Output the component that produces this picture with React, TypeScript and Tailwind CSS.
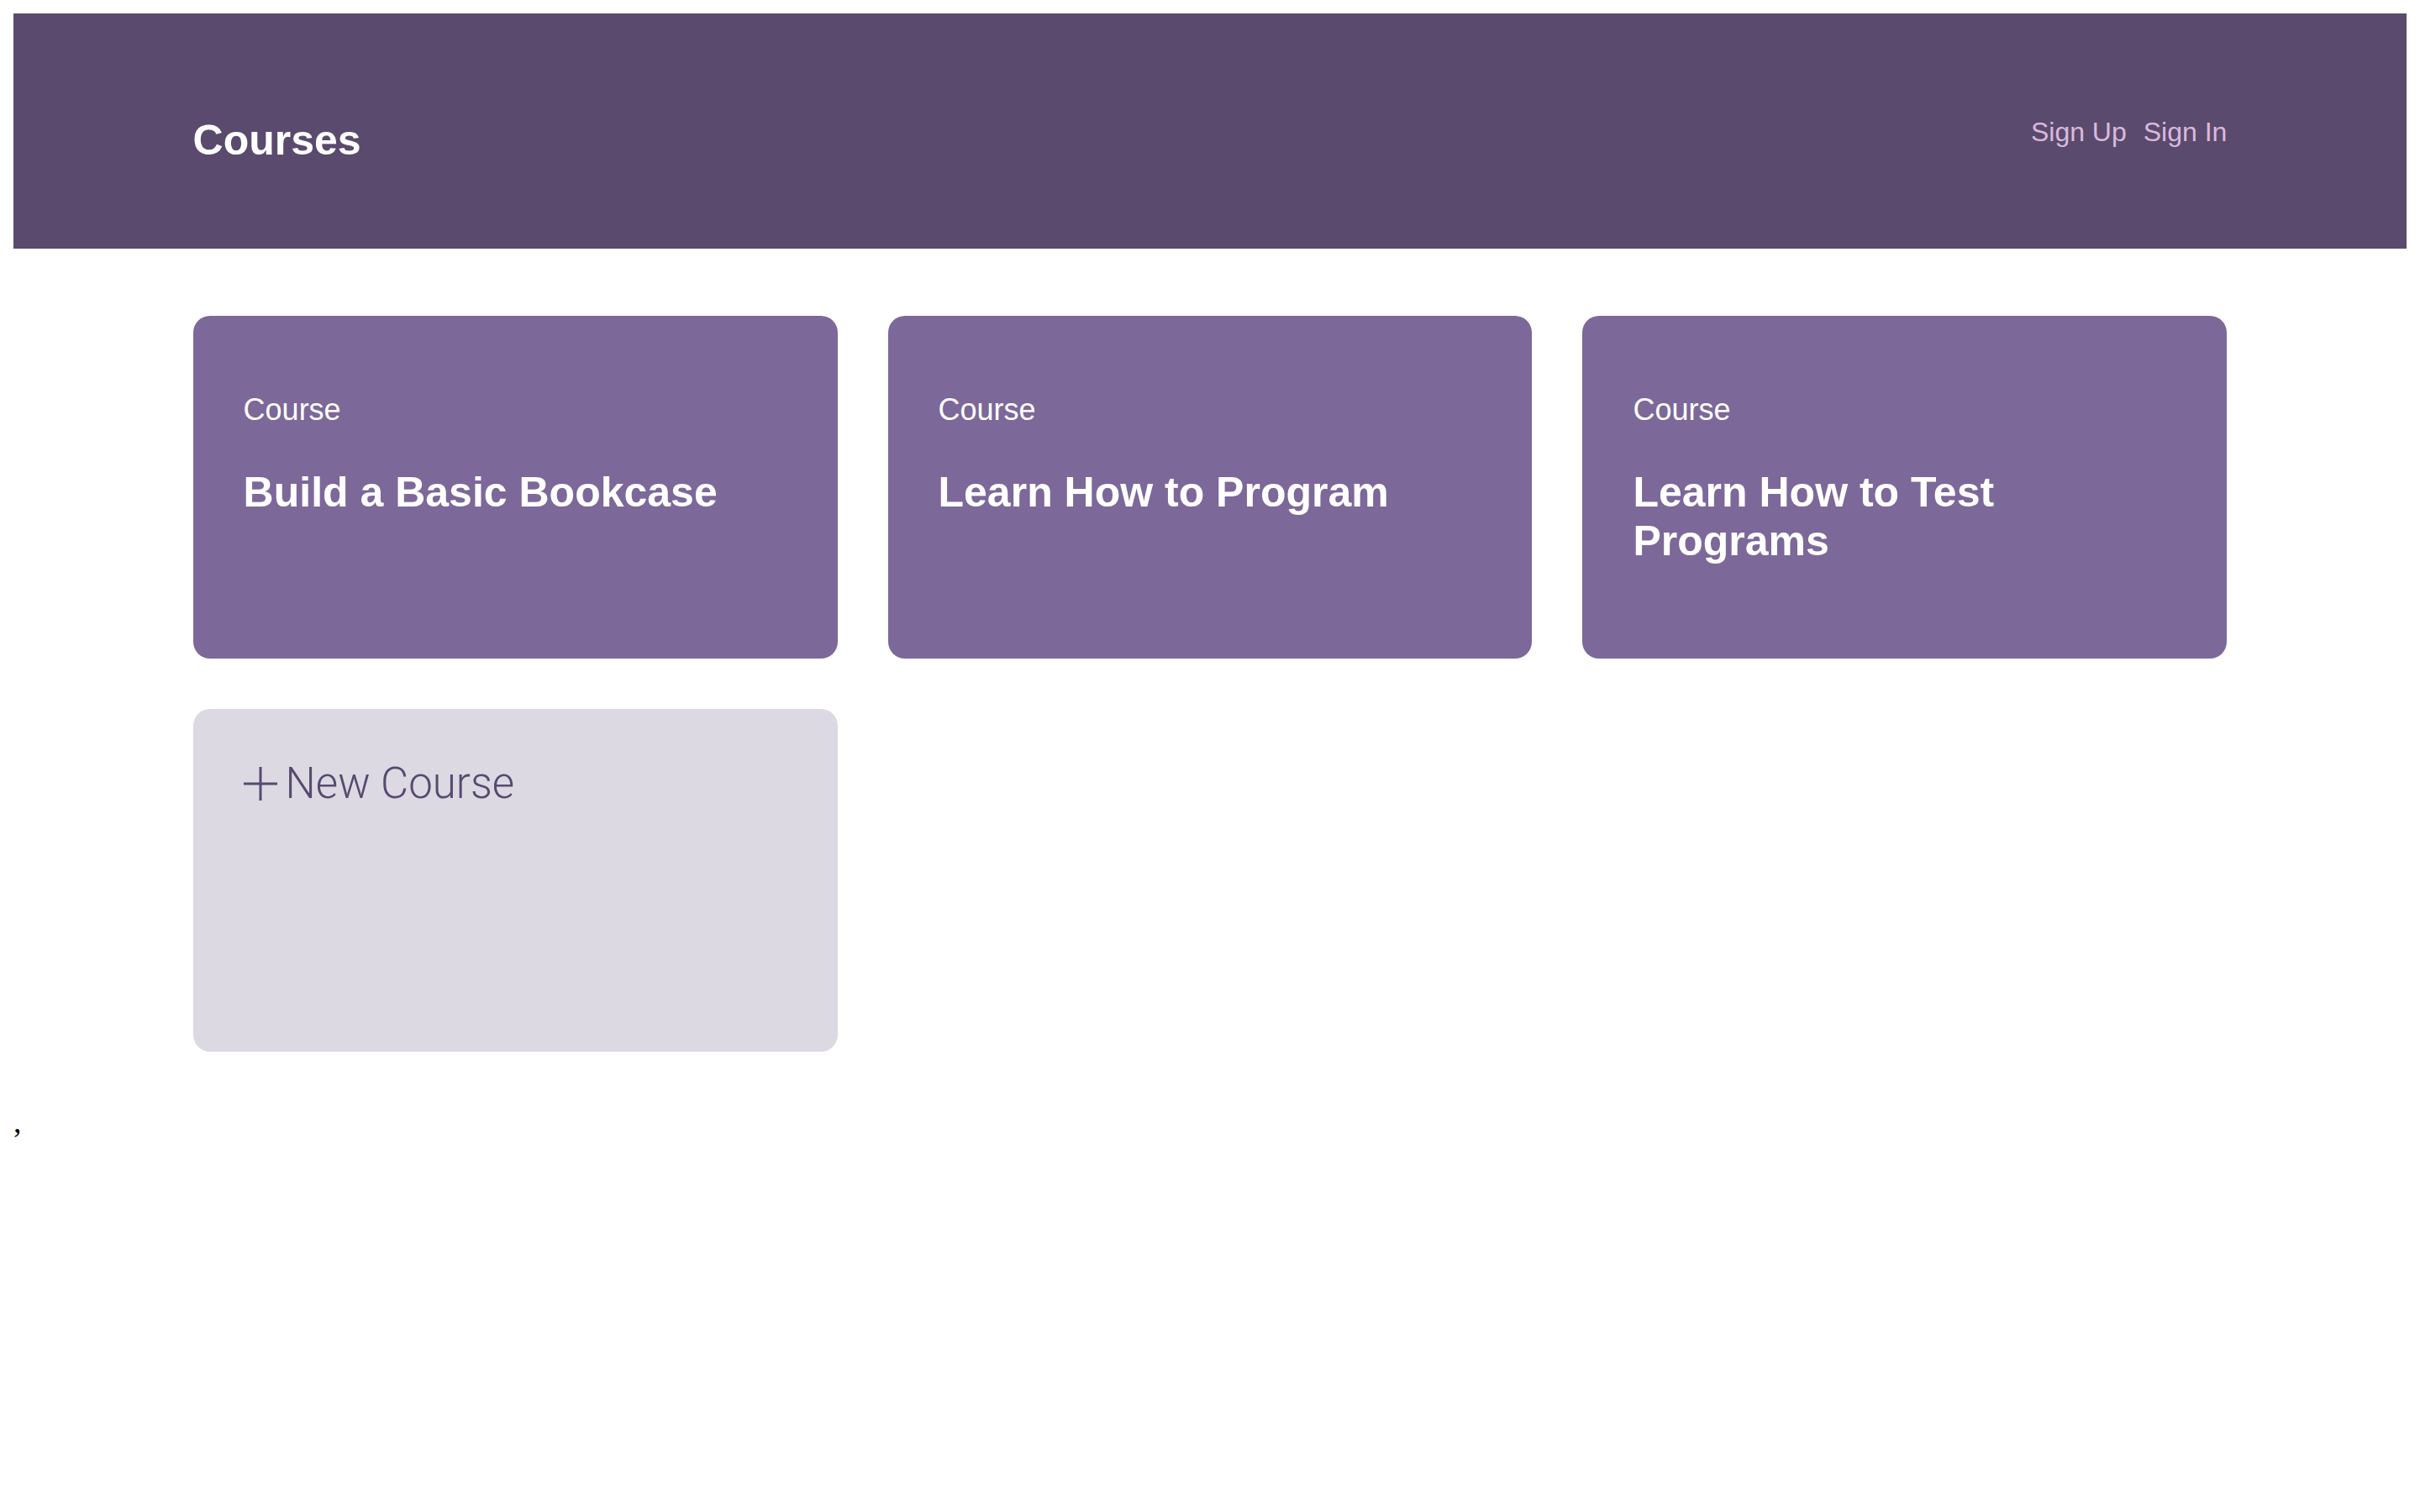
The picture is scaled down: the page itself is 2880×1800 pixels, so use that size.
// course listing page: header bar, a grid of course cards and a "new course" tile

const courses = [
  { id: 1, title: "Build a Basic Bookcase" },
  { id: 2, title: "Learn How to Program" },
  { id: 3, title: "Learn How to Test Programs" },
];

const CourseCard = ({ title }: { title: string }) => {
  return (
    <div className="h-[408px] rounded-[20px] bg-[#7c6899] px-[60px] pt-[91px] text-white">
      <div className="text-[36px] leading-[1.15]">Course</div>
      <h3 className="mt-[50px] text-[50px] font-bold leading-[1.15]">{title}</h3>
    </div>
  );
};

const NewCourseCard = () => {
  return (
    <div className="h-[408px] rounded-[20px] bg-[#dcd9e3] p-[60px] text-[#574a6e]">
      <div className="flex items-center gap-[10px]">
        <svg width="40" height="40" viewBox="0 0 40 40" className="shrink-0">
          <path d="M20 0V40M0 20H40" stroke="currentColor" strokeWidth="3" />
        </svg>
        <span className="font-['Roboto'] text-[51px] font-light leading-[1.15]">New Course</span>
      </div>
    </div>
  );
};

export default function App() {
  return (
    <div className="m-4 font-['Liberation_Sans',Arial,sans-serif]">
      <header className="h-[280px] bg-[#5a4a6e]">
        <div className="mx-auto flex w-[85%] items-start justify-between pt-[123px]">
          <h1 className="text-[50px] font-bold leading-[1.15] text-white">Courses</h1>
          <nav className="flex gap-[20px] text-[32px] leading-[1.15] text-[#dbb9dc]">
            <a href="#">Sign Up</a>
            <a href="#">Sign In</a>
          </nav>
        </div>
      </header>

      <div className="mx-auto mt-[80px] grid w-[85%] grid-cols-3 gap-[60px]">
        {courses.map((c) => (
          <CourseCard key={c.id} title={c.title} />
        ))}
        <NewCourseCard />
      </div>

      <div className="mt-[62px] font-['Liberation_Serif',serif] text-[38px] leading-[1.15] text-black">,</div>
    </div>
  );
}
